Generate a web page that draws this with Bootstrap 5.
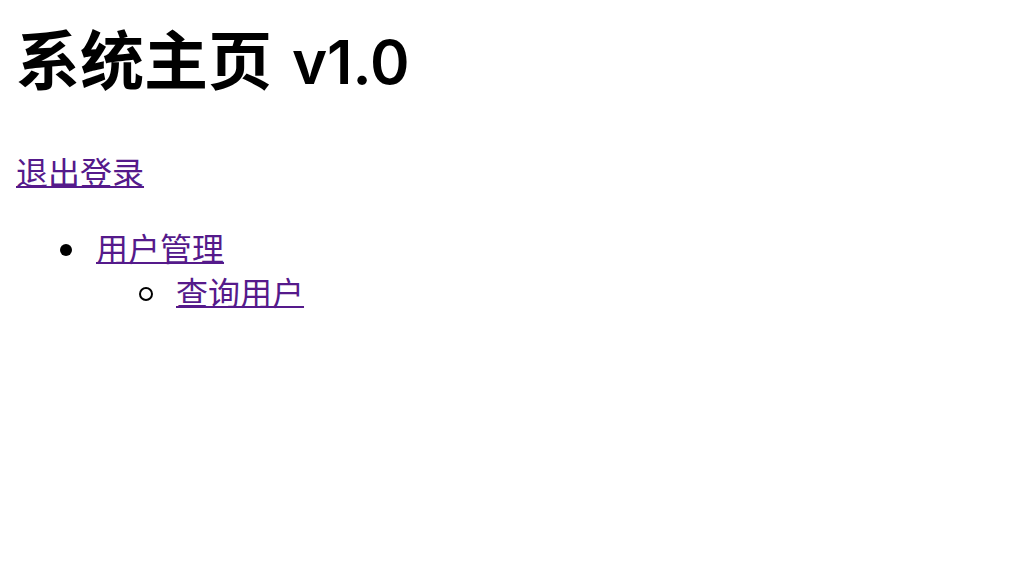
<!DOCTYPE html>
<html lang="zh-CN">
<head>
<meta charset="utf-8">
<meta name="viewport" content="width=device-width, initial-scale=1">
<title>系统主页</title>
<link href="https://cdn.jsdelivr.net/npm/bootstrap@5.3.0/dist/css/bootstrap.min.css" rel="stylesheet">
<style>
body { font-family: Roboto, "Noto Sans CJK SC", sans-serif; font-size: 32px; line-height: 44px; color: #000; }
main { padding-top: 17px; }
h1.page-title { font-size: 64px; line-height: 90px; font-weight: 700; margin-bottom: 44px; }
.page-title span { font-family: Inter, Roboto, sans-serif; font-size: 60px; font-weight: 600; }
a { color: #551a8b; text-decoration-thickness: 2px; text-underline-offset: 1px; text-decoration-skip-ink: none; }
a:hover { color: #551a8b; }
.menu-tree { margin-top: 32px; }
.menu-tree, .menu-tree ul { padding-left: 80px; list-style: none; }
.menu-tree li { position: relative; }
.menu-tree li::before { content: ""; position: absolute; top: 16px; left: -36px; width: 12px; height: 12px; border-radius: 50%; background: #000; }
.menu-tree ul li::before { top: 15px; left: -37px; width: 14px; height: 14px; border: 2px solid #000; background: none; }
</style>
</head>
<body class="bg-white">
<main class="container-fluid px-3">
<h1 class="page-title">系统主页 <span class="ms-1">v1.0</span></h1>
<a href="#logout">退出登录</a>
<ul class="menu-tree mb-0">
<li><a href="#users">用户管理</a>
<ul>
<li><a href="#search">查询用户</a></li>
</ul>
</li>
</ul>
</main>
<script src="https://cdn.jsdelivr.net/npm/bootstrap@5.3.0/dist/js/bootstrap.bundle.min.js"></script>
</body>
</html>
